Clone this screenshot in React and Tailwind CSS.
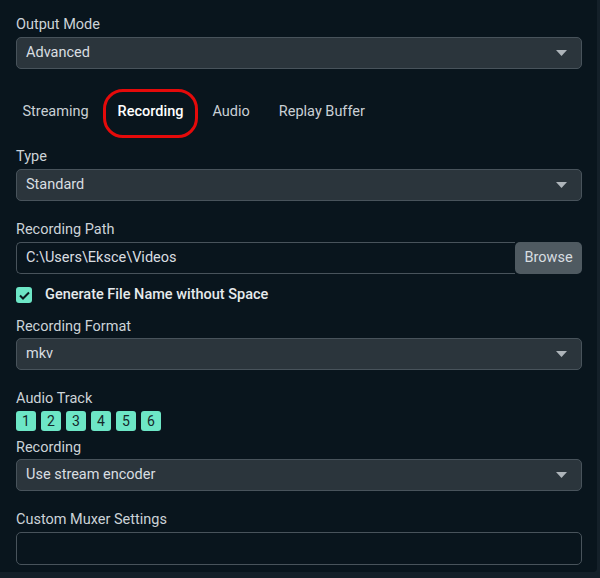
import React from 'react';

const Label = ({ children }) => (
  <div className="h-[18px] text-[14.5px] leading-[18px] text-[#ccd3d8]">{children}</div>
);

const Select = ({ value, className = 'mt-[3px]' }) => (
  <div className={`${className} flex h-[32px] items-center justify-between rounded-[5px] border border-[#48535b] bg-[#2b353c] pl-[9px] pr-[14px]`}>
    <span className="text-[14.5px] text-[#d9dee1]">{value}</span>
    <svg width="11" height="6" viewBox="0 0 11 6">
      <path d="M0 0h11L5.5 6z" fill="#aeb5ba" />
    </svg>
  </div>
);

const tabs = ['Streaming', 'Recording', 'Audio', 'Replay Buffer'];

export default function App() {
  return (
    <div
      className="h-[578px] w-[600px] overflow-hidden bg-[#142029]"
      style={{ fontFamily: 'Roboto, "Liberation Sans", sans-serif' }}
    >
      <div className="h-[572px] w-[597px] rounded-br-[4px] bg-[#09151d] pl-[16px] pr-[15px] pt-[16px]">
        <Label>Output Mode</Label>
        <Select value="Advanced" />

        <div className="-ml-[8px] mt-[20px] flex h-[49px]">
          {tabs.map((t) => (
            <div key={t} className="relative flex items-center px-[14.5px] pb-[4px]">
              <span
                className={
                  t === 'Recording'
                    ? 'text-[14.5px] font-medium text-white'
                    : 'text-[14.5px] text-[#c9d0d5]'
                }
              >
                {t}
              </span>
              {t === 'Recording' && (
                <div className="absolute inset-0 rounded-[20px] border-[3px] border-[#e50a0a]" />
              )}
            </div>
          ))}
        </div>

        <div className="mt-[10px]">
          <Label>Type</Label>
          <Select value="Standard" />
        </div>

        <div className="mt-[20px]">
          <Label>Recording Path</Label>
          <div className="mt-[3px] flex h-[32px]">
            <div className="flex flex-1 items-center rounded-l-[5px] border border-r-0 border-[#48535b] pl-[9px] text-[14.5px] text-[#d9dee1]">
              C:\Users\Eksce\Videos
            </div>
            <div className="flex w-[67px] items-center justify-center rounded-[5px] bg-[#4f5a61] text-[14.5px] text-[#d7dde0]">
              Browse
            </div>
          </div>
        </div>

        <div className="mt-[13px] flex h-[16px] items-center">
          <div className="flex h-[16px] w-[16px] items-center justify-center rounded-[3px] bg-[#6de6c6]">
            <svg width="11" height="9" viewBox="0 0 11 9">
              <path d="M1 4.5l3 3L10 1.5" stroke="#0b1b20" strokeWidth="2" fill="none" />
            </svg>
          </div>
          <span className="ml-[13px] text-[14.5px] font-medium text-[#e6eaec]">
            Generate File Name without Space
          </span>
        </div>

        <div className="mt-[15px]">
          <Label>Recording Format</Label>
          <Select value="mkv" className="mt-[2px]" />
        </div>

        <div className="mt-[20px]">
          <Label>Audio Track</Label>
          <div className="mt-[3px] flex gap-[5px]">
            {[1, 2, 3, 4, 5, 6].map((n) => (
              <div
                key={n}
                className="flex h-[20px] w-[20px] items-center justify-center rounded-[3px] bg-[#6de6c6] text-[14px] text-[#15282a]"
              >
                {n}
              </div>
            ))}
          </div>
        </div>

        <div className="mt-[8px]">
          <Label>Recording</Label>
          <Select value="Use stream encoder" className="mt-[2px]" />
        </div>

        <div className="mt-[20px]">
          <Label>Custom Muxer Settings</Label>
          <div className="mt-[3px] h-[33px] rounded-[5px] border border-[#48535b]" />
        </div>
      </div>
    </div>
  );
}
